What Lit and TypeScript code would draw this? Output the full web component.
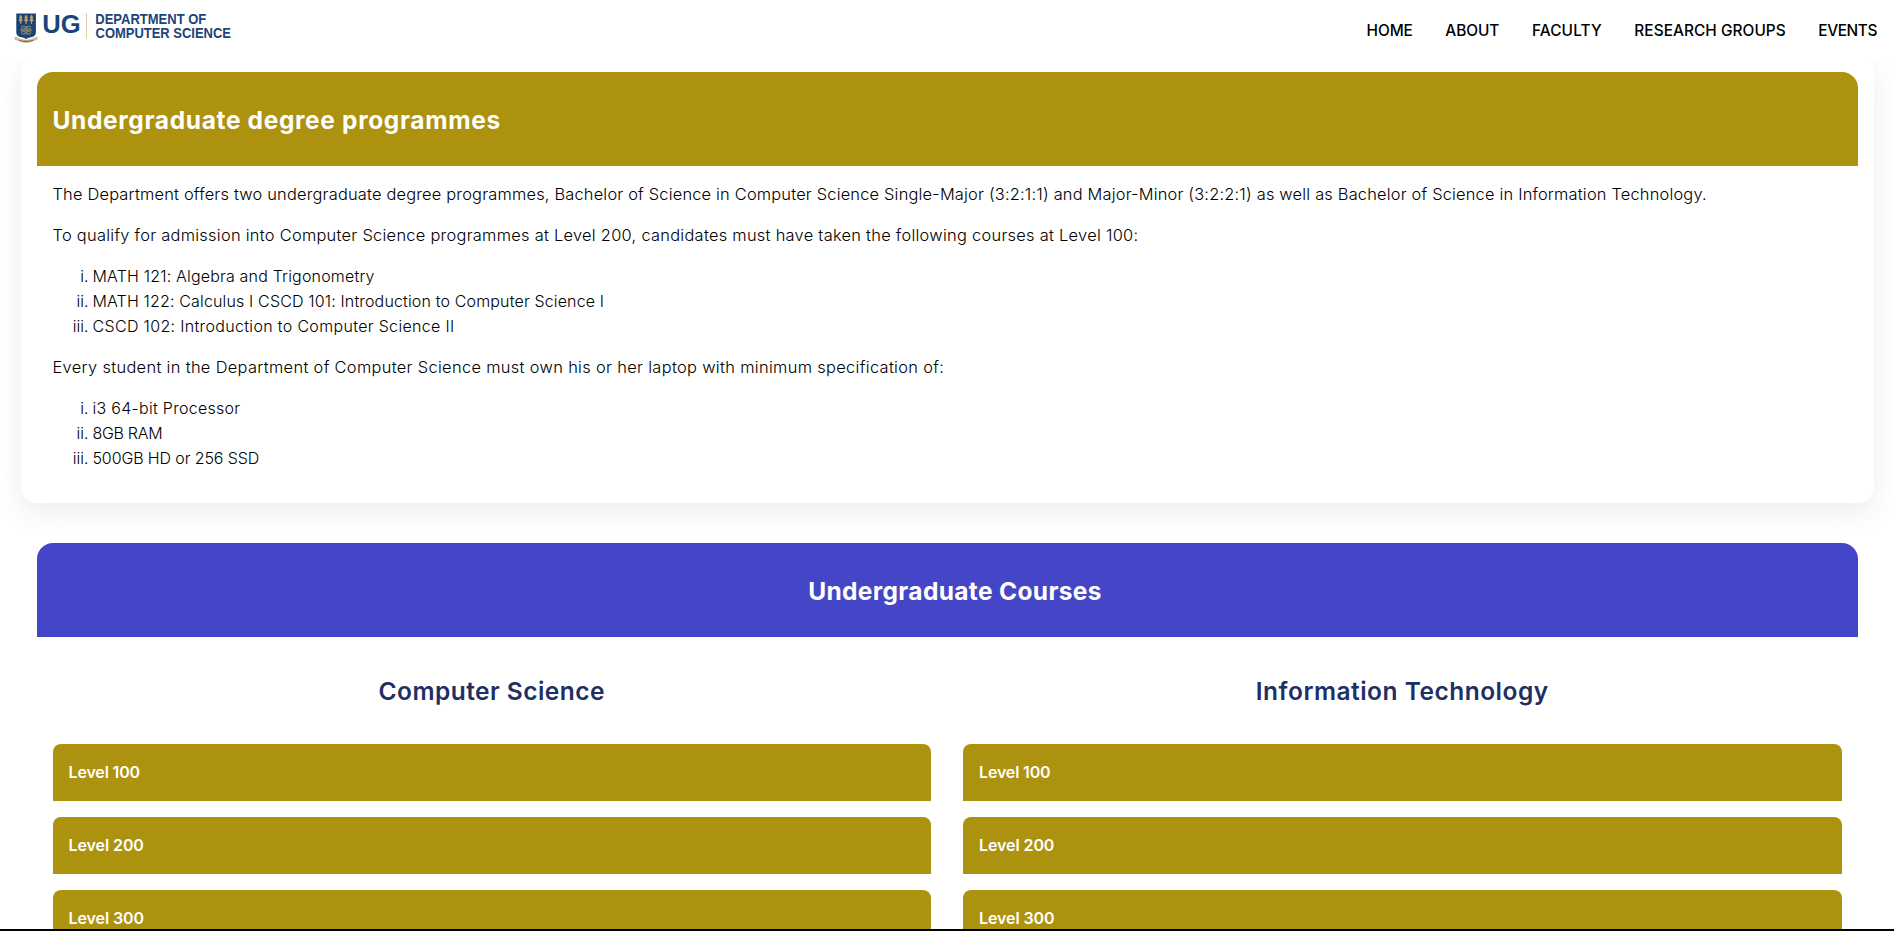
import { LitElement, html, css, svg } from "lit";

type Line = { text: string; track: number };

const NAV: Line[] = [
  { text: "HOME", track: -0.05 },
  { text: "ABOUT", track: -0.05 },
  { text: "FACULTY", track: 0.14 },
  { text: "RESEARCH GROUPS", track: 0.05 },
  { text: "EVENTS", track: -0.4 },
];

const INTRO: Line = {
  text: "The Department offers two undergraduate degree programmes, Bachelor of Science in Computer Science Single-Major (3:2:1:1) and Major-Minor (3:2:2:1) as well as Bachelor of Science in Information Technology.",
  track: 0.196,
};
const QUALIFY: Line = {
  text: "To qualify for admission into Computer Science programmes at Level 200, candidates must have taken the following courses at Level 100:",
  track: 0.281,
};
const COURSES: Line[] = [
  { text: "MATH 121: Algebra and Trigonometry", track: 0.18 },
  { text: "MATH 122: Calculus I CSCD 101: Introduction to Computer Science I", track: 0.15 },
  { text: "CSCD 102: Introduction to Computer Science II", track: 0.33 },
];
const LAPTOP: Line = {
  text: "Every student in the Department of Computer Science must own his or her laptop with minimum specification of:",
  track: 0.332,
};
const SPECS: Line[] = [
  { text: "i3 64-bit Processor", track: 0.28 },
  { text: "8GB RAM", track: -0.3 },
  { text: "500GB HD or 256 SSD", track: -0.12 },
];
const TRACKS: { title: Line; levels: Line[] }[] = [
  { text: "Computer Science", track: 0.46 },
  { text: "Information Technology", track: 0.5 },
].map((title) => ({
  title,
  levels: [
    { text: "Level 100", track: -0.15 },
    { text: "Level 200", track: -0.08 },
    { text: "Level 300", track: -0.08 },
  ],
}));

const tracked = (l: Line) => html`<span style="letter-spacing:${l.track}px">${l.text}</span>`;

class UgLogo extends LitElement {
  static styles = css`
    :host { display: block; width: 228px; height: 48px; }
    svg { display: block; }
    .word { font-family: "Liberation Sans", Arial, sans-serif; font-weight: 700; fill: #1c4478; }
  `;

  render() {
    const torch = (x: number) => svg`
      <path d="M${x} 2.6 l1.7 2.6 -.7 1.6 1.2 1.6 -1.5 1.2 -.2 2.4 h-1 l-.2-2.4 -1.5-1.2 1.2-1.6 -.7-1.6z" fill="#b9a16a"/>`;
    return html`
      <svg width="228" height="48" viewBox="0 -8 228 48" role="img" aria-label="University of Ghana Department of Computer Science">
        <path d="M4.3 1.6h19.6v18.6q0 3.6-3.8 4.7-4 .6-6 2.1-2-1.5-6-2.1-3.8-1.1-3.8-4.7z" fill="#1b4275"/>
        ${[8.7, 14.1, 19.5].map(torch)}
        <g fill="none" stroke="#9c9470" stroke-width="1">
          <rect x="9.6" y="14.2" width="3.6" height="2.8" rx="1"/><rect x="15" y="14.2" width="3.6" height="2.8" rx="1"/>
          <rect x="9.6" y="19.2" width="3.6" height="2.8" rx="1"/><rect x="15" y="19.2" width="3.6" height="2.8" rx="1"/>
          <path d="M8 18.1h12.2M14.1 14v8.5"/>
        </g>
        <path d="M2.2 24.8l3.4.6q8.5 4.8 17 0l3.4-.6-.8 3.2-2.6.6q-8.5 4.6-17 0l-2.6-.6z" fill="#d3bd8e"/>
        <path d="M7 28.2q7 2.4 14.2 0" fill="none" stroke="#6f6a5c" stroke-width="1.1"/>
        <text class="word" x="30.3" y="21.3" font-size="26.5" textLength="38.4" lengthAdjust="spacingAndGlyphs">UG</text>
        <path d="M74.5 1v25.5" stroke="#dfcda6" stroke-width="1"/>
        <text class="word" x="83.3" y="12" font-size="13.8" textLength="111" lengthAdjust="spacingAndGlyphs">DEPARTMENT OF</text>
        <text class="word" x="83.6" y="25.8" font-size="13.8" textLength="135.3" lengthAdjust="spacingAndGlyphs">COMPUTER SCIENCE</text>
      </svg>
    `;
  }
}
customElements.define("ug-logo", UgLogo);

class AppRoot extends LitElement {
  static styles = css`
    :host {
      display: flex;
      flex-direction: column;
      height: 931px;
      box-sizing: border-box;
      overflow: hidden;
      background: #fff;
      border-bottom: 2px solid #000;
      font-family: Inter, "Open Sans", sans-serif;
      font-size: 16px;
      line-height: 25px;
      font-weight: 300;
      color: #000;
    }
    h2, h3, h4, p, ol, ul { margin: 0; padding: 0; font-weight: inherit; font-size: inherit; }
    .top {
      flex: none;
      display: flex;
      justify-content: space-between;
      height: 60px;
      box-sizing: border-box;
      padding: 4px 17px 0 12px;
      background: #fff;
      z-index: 1;
    }
    .nav {
      display: flex;
      gap: 32.5px;
      padding-top: 14px;
      list-style: none;
      font-size: 15.4px;
      font-weight: 500;
    }
    .page { flex: 1; min-height: 0; padding: 0 20.5px; }
    .card {
      margin-top: -4px;
      padding: 16px;
      border-radius: 16px;
      background: #fff;
      box-shadow: 0 10px 30px rgba(17, 17, 26, 0.075);
    }
    .banner {
      height: 94px;
      box-sizing: border-box;
      padding: 2px 16px 0;
      display: flex;
      align-items: center;
      border-radius: 16px 16px 0 0;
      background: #ad920f;
      color: #fff;
      font-size: 24.5px;
      font-weight: 700;
      line-height: 36px;
    }
    .blue { justify-content: center; background: #4545c7; padding-left: 32px; }
    .body { display: flex; flex-direction: column; gap: 16px; padding: 16px; }
    .body p { font-size: 16.4px; }
    .list { padding-left: 40px; list-style: lower-roman; }
    .courses { padding: 40px 16px 0; }
    .tracks { display: grid; grid-template-columns: 1fr 1fr; gap: 32px; padding: 0 16px; }
    .track { display: flex; flex-direction: column; gap: 16px; }
    .title {
      height: 91px;
      box-sizing: border-box;
      padding-top: 36px;
      text-align: center;
      font-size: 24.5px;
      line-height: 36px;
      font-weight: 600;
      color: #1f2f63;
    }
    .level {
      padding: 16px;
      border-radius: 8px 8px 0 0;
      background: #ad920f;
      color: #fff;
      font-weight: 600;
    }
  `;

  render() {
    return html`
      <header class="top">
        <ug-logo></ug-logo>
        <ul class="nav">${NAV.map((n) => html`<li>${tracked(n)}</li>`)}</ul>
      </header>
      <main class="page">
        <section class="card">
          <div class="banner"><h2>${tracked({ text: "Undergraduate degree programmes", track: 0.65 })}</h2></div>
          <div class="body">
            <p>${tracked(INTRO)}</p>
            <p>${tracked(QUALIFY)}</p>
            <ol class="list">${COURSES.map((c) => html`<li>${tracked(c)}</li>`)}</ol>
            <p>${tracked(LAPTOP)}</p>
            <ol class="list">${SPECS.map((c) => html`<li>${tracked(c)}</li>`)}</ol>
          </div>
        </section>
        <section class="courses">
          <div class="banner blue"><h2>${tracked({ text: "Undergraduate Courses", track: 0.34 })}</h2></div>
          <div class="tracks">
            ${TRACKS.map(
              (t) => html`<div class="track">
                <h3 class="title">${tracked(t.title)}</h3>
                ${t.levels.map((l) => html`<h4 class="level">${tracked(l)}</h4>`)}
              </div>`
            )}
          </div>
        </section>
      </main>
    `;
  }
}
customElements.define("app-root", AppRoot);
